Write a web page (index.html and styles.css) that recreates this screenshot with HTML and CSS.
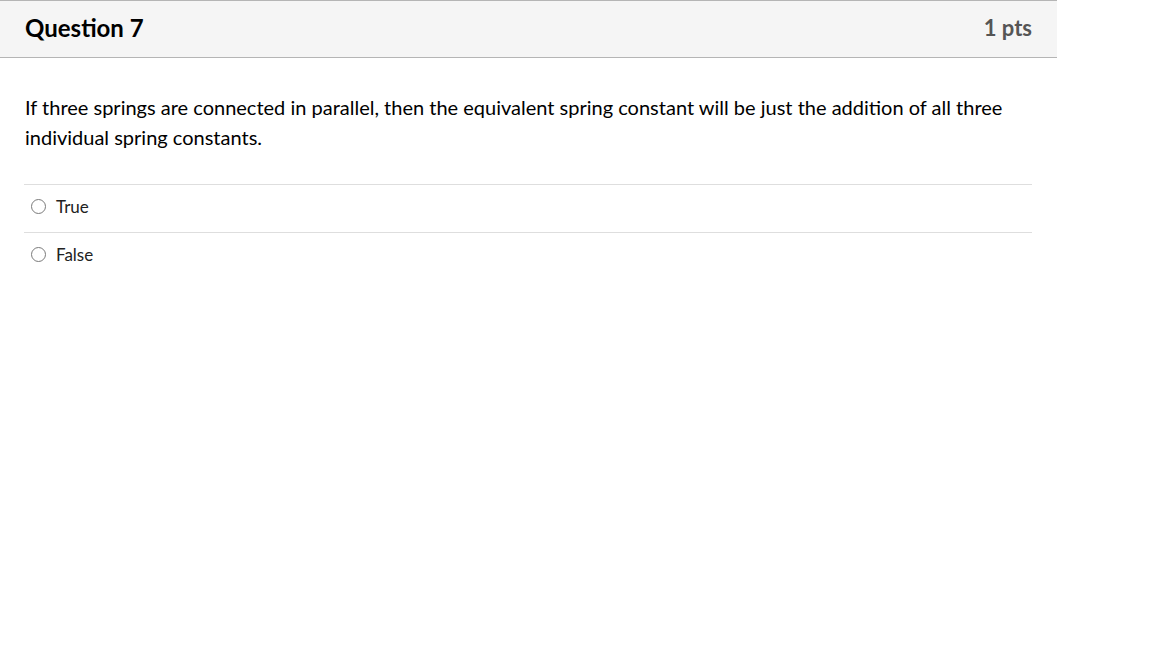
FILE: index.html
```html
<!DOCTYPE html>
<html>
<head>
<meta charset="utf-8">
<link rel="stylesheet" href="styles.css">
</head>
<body>
<div class="question">
  <div class="header">
    <h2 class="title">Question 7</h2>
    <div class="points">1 pts</div>
  </div>
  <div class="content">
    <p class="text">If three springs are connected in parallel, then the equivalent spring constant will be just the addition of all three individual spring constants.</p>
    <div class="answers">
      <label class="answer"><span class="radio"></span><span class="label">True</span></label>
      <label class="answer"><span class="radio"></span><span class="label">False</span></label>
    </div>
  </div>
</div>
</body>
</html>
```
FILE: styles.css
```css
html, body {
  margin: 0;
  padding: 0;
  background: #fff;
}
body {
  font-family: Lato, "Open Sans", sans-serif;
  color: #2d3b45;
}
.question {
  width: 1057px;
}
.header {
  display: flex;
  justify-content: space-between;
  align-items: center;
  padding: 0 25px 4px;
  box-sizing: border-box;
  height: 58px;
  background: #f5f5f5;
  border-top: 1px solid #b5b5b5;
  border-bottom: 1px solid #b5b5b5;
}
.title {
  margin: 0;
  font-size: 24px;
  font-weight: 700;
  color: #000;
}
.points {
  font-size: 22px;
  font-weight: 700;
  color: #555;
}
.content {
  padding: 34px 25px 0 24px;
}
.text {
  margin: 0 0 32px 1px;
  font-size: 20px;
  line-height: 30px;
  color: #000;
}
.answers {
  display: flex;
  flex-direction: column;
}
.answer {
  display: flex;
  align-items: center;
  border-top: 1px solid #dedede;
  padding-left: 7px;
  padding-bottom: 5px;
  box-sizing: border-box;
  height: 48px;
}
.radio {
  width: 13px;
  height: 13px;
  border: 1px solid #7a7a7a;
  border-radius: 50%;
  margin-right: 10px;
  background: #fff;
}
.label {
  font-size: 17px;
  color: #222;
}
```
